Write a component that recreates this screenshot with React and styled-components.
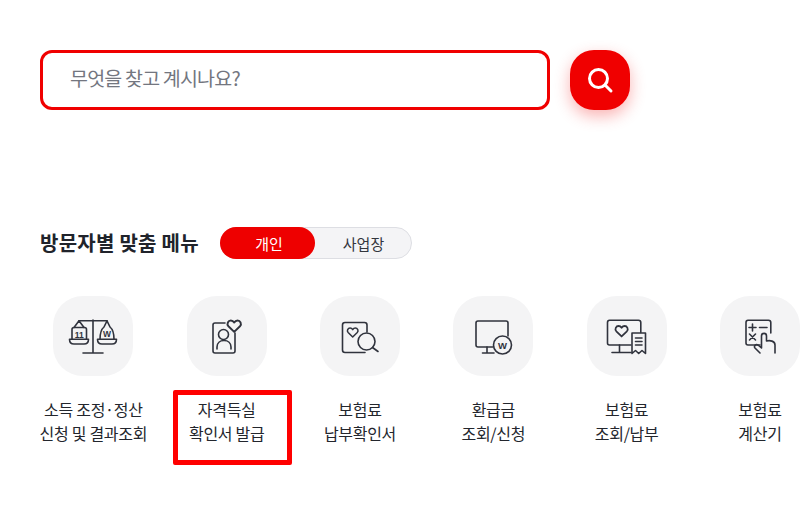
import React from "react";
import styled, { createGlobalStyle } from "styled-components";

const Global = createGlobalStyle`
  html, body {
    margin: 0;
    padding: 0;
    background: #fff;
    overflow: hidden;
  }
  body {
    font-family: "Noto Sans CJK KR", "Noto Sans", sans-serif;
    color: #222;
  }
`;

const Page = styled.div`
  position: relative;
  width: 807px;
  height: 512px;
  padding: 50px 0 0 40px;
  box-sizing: border-box;
  overflow: hidden;
`;

const SearchRow = styled.div`
  display: flex;
  gap: 20px;
`;

const SearchBox = styled.div`
  width: 510px;
  height: 60px;
  box-sizing: border-box;
  border: 3px solid #f00000;
  border-radius: 12px;
  padding: 0 27px 5px;
  display: flex;
  align-items: center;
  font-size: 19.5px;
  letter-spacing: -0.8px;
  color: #73767f;
`;

const SearchButton = styled.button`
  width: 60px;
  height: 60px;
  padding: 0;
  border: 0;
  border-radius: 24px;
  background: #f00000;
  box-shadow: 0 6px 16px rgba(240, 0, 0, 0.3);
  display: flex;
  align-items: center;
  justify-content: center;
`;

const TitleRow = styled.div`
  display: flex;
  align-items: center;
  gap: 21px;
  margin-top: 117px;
`;

const Title = styled.h2`
  margin: -2px 0 0;
  width: 159px;
  white-space: nowrap;
  font-size: 20px;
  font-weight: 700;
  letter-spacing: 0.25px;
  color: #20232b;
`;

const Toggle = styled.div`
  display: flex;
  width: 192px;
  height: 32px;
  box-sizing: border-box;
  border: 1px solid #dddee3;
  border-radius: 16px;
  background: #f4f4f6;
`;

const ToggleItem = styled.div`
  width: ${(p) => (p.$active ? "95px" : "96px")};
  height: ${(p) => (p.$active ? "32px" : "30px")};
  margin: ${(p) => (p.$active ? "-1px 0 0 -1px" : "0")};
  padding-left: ${(p) => (p.$active ? "3px" : "1px")};
  box-sizing: border-box;
  border-radius: 16px;
  background: ${(p) => (p.$active ? "#ee0000" : "transparent")};
  color: ${(p) => (p.$active ? "#fff" : "#33363d")};
  display: flex;
  align-items: center;
  justify-content: center;
  font-size: 15px;
`;

const MenuRow = styled.div`
  display: flex;
  margin: 37px 0 0 -13.33px;
`;

const MenuItem = styled.div`
  flex: 0 0 133.33px;
  display: flex;
  flex-direction: column;
  align-items: center;
`;

const IconTile = styled.div`
  width: 80px;
  height: 80px;
  border-radius: 30px;
  background: #f4f4f5;
`;

const Label = styled.div`
  margin-top: 21px;
  text-align: center;
  white-space: nowrap;
  font-size: 16px;
  line-height: 24px;
  letter-spacing: -0.3px;
  color: #23262d;
`;

const Highlight = styled.div`
  position: absolute;
  left: 173px;
  top: 390px;
  width: 119px;
  height: 75px;
  box-sizing: border-box;
  border: 5px solid #ff0000;
  border-radius: 2px;
`;

const Svg = styled.svg`
  display: block;
  fill: none;
  stroke: #30333d;
  stroke-width: 1.6;
  stroke-linecap: round;
  stroke-linejoin: round;
  text {
    stroke: none;
    fill: #30333d;
    font-family: "Liberation Sans", sans-serif;
    font-weight: 700;
    text-anchor: middle;
  }
`;

const heart = (x, y, s = 1) => (
  <path
    transform={`translate(${x} ${y}) scale(${s})`}
    d="M6 9.5 1.2 4.8C-.6 2.8 1 0 3.2 0 4.5 0 5.4.7 6 1.7 6.6.7 7.5 0 8.8 0 11 0 12.6 2.8 10.8 4.8Z"
  />
);

const ScaleIcon = () => (
  <Svg viewBox="0 0 80 80" width="80" height="80">
    <path d="M40 24V57M30 57H50M26 24.8H54" />
    <path d="M26 24.8 21 31.5M26 24.8 31 31.5" />
    <path d="M19 43V33.5C19 32.3 19.8 31.5 21 31.5H31.5C32.7 31.5 33.5 32.3 33.5 33.5V43" />
    <path d="M16.5 43.3H35.5C35.5 46.3 33.5 48 31 48H21C18.5 48 16.5 46.3 16.5 43.3Z" />
    <text x="26.2" y="41.5" fontSize="8.5">11</text>
    <path d="M54 24.8 57 31C59.5 33 61 38 61 43.3M54 24.8 51 31C48.5 33 47 38 47 43.3" />
    <path d="M44.5 43.3H63.5C63.5 46.3 61.5 48 59 48H49C46.5 48 44.5 46.3 44.5 43.3Z" />
    <text x="54" y="41" fontSize="8.5">W</text>
  </Svg>
);

const CertIcon = () => (
  <Svg viewBox="0 0 80 80" width="80" height="80">
    <path d="M38 27H28C26.8 27 26 27.8 26 29V55C26 56.2 26.8 57 28 57H46C47.2 57 48 56.2 48 55V37" />
    {heart(40, 24.5, 1.2)}
    <circle cx="36.5" cy="38.5" r="5" />
    <path d="M30 53V51C30 47 33 44.5 37 44.5S44 47 44 51V53" />
  </Svg>
);

const ReceiptSearchIcon = () => (
  <Svg viewBox="0 0 80 80" width="80" height="80">
    <path d="M47 36V29C47 27.5 46 26.5 44.5 26.5H25C23.5 26.5 22.5 27.5 22.5 29V54C22.5 55.5 23.5 56.5 25 56.5H45" />
    {heart(27, 32, 0.95)}
    <circle cx="46.5" cy="45.5" r="8.5" />
    <path d="M52.5 51.5 58 55.5" />
  </Svg>
);

const MonitorWonIcon = () => (
  <Svg viewBox="0 0 80 80" width="80" height="80">
    <path d="M55 40V27C55 25.6 54.2 25 53 25H25C23.6 25 23 25.6 23 27V49C23 50.4 23.6 51 25 51H40" />
    <path d="M34 51V57M29.5 57H41" />
    <circle cx="49.5" cy="49" r="9" />
    <text x="49.5" y="52.5" fontSize="9.5">W</text>
  </Svg>
);

const MonitorReceiptIcon = () => (
  <Svg viewBox="0 0 80 80" width="80" height="80">
    <path d="M44 49H22.5C21 49 20.5 48.2 20.5 47V26.5C20.5 25 21.2 24.2 22.5 24.2H51.5C53 24.2 53.8 25 53.8 26.5V36.5" />
    <path d="M32.5 49V56.5M25 56.5H44" />
    {heart(28, 30, 1.1)}
    <path d="M45 37H58.5V57.5L55 54.5 51.7 57.5 48.5 54.5 45 57.5Z" />
    <path d="M48.5 42H55M48.5 45.5H55M48.5 49H55" />
  </Svg>
);

const CalcHandIcon = () => (
  <Svg viewBox="0 0 80 80" width="80" height="80">
    <path d="M40 49H28C26.6 49 26 48.2 26 47V26.5C26 25 26.6 24.2 28 24.2H48.5C50 24.2 50.8 25 50.8 26.5V37" />
    <path d="M32.5 28V35M29 31.5H36M39.5 31.5H47M29.5 38 35.5 44M35.5 38 29.5 44" />
    <path d="M40 57 35 52C33.5 50 36 47.5 38 49L41.5 52V40C41.5 36.5 46.5 36.5 46.5 40V45C50 44 55 45 55 49V57" />
  </Svg>
);

const menus = [
  { icon: <ScaleIcon />, lines: ["소득 조정·정산", "신청 및 결과조회"] },
  { icon: <CertIcon />, lines: ["자격득실", "확인서 발급"] },
  { icon: <ReceiptSearchIcon />, lines: ["보험료", "납부확인서"] },
  { icon: <MonitorWonIcon />, lines: ["환급금", "조회/신청"] },
  { icon: <MonitorReceiptIcon />, lines: ["보험료", "조회/납부"] },
  { icon: <CalcHandIcon />, lines: ["보험료", "계산기"] },
];

const App = () => {
  return (
    <>
      <Global />
      <Page>
        <SearchRow>
          <SearchBox>무엇을 찾고 계시나요?</SearchBox>
          <SearchButton aria-label="검색">
            <svg width="28" height="28" viewBox="0 0 28 28" fill="none" stroke="#fff" strokeWidth="3" strokeLinecap="round">
              <circle cx="12.5" cy="12.5" r="9" />
              <path d="M19.5 19.5 25 25" />
            </svg>
          </SearchButton>
        </SearchRow>
        <TitleRow>
          <Title>방문자별 맞춤 메뉴</Title>
          <Toggle>
            <ToggleItem $active>개인</ToggleItem>
            <ToggleItem>사업장</ToggleItem>
          </Toggle>
        </TitleRow>
        <MenuRow>
          {menus.map((m, i) => (
            <MenuItem key={i}>
              <IconTile>{m.icon}</IconTile>
              <Label>
                {m.lines[0]}
                <br />
                {m.lines[1]}
              </Label>
            </MenuItem>
          ))}
        </MenuRow>
        <Highlight />
      </Page>
    </>
  );
};

export default App;
